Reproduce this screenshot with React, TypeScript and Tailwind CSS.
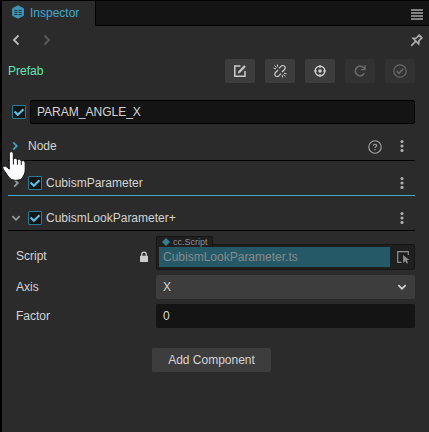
import React, { useState } from 'react';

const Chevron: React.FC<{ className?: string }> = ({ className = '' }) => (
  <svg viewBox="0 0 12 12" className={`w-3 h-3 shrink-0 ${className}`} fill="none" stroke="currentColor" strokeWidth="2">
    <path d="M3.5 1.5 8 6l-4.5 4.5" />
  </svg>
);

const SmallChevron: React.FC<{ className?: string }> = ({ className = '' }) => (
  <svg viewBox="0 0 10 10" className={`w-2.5 h-2.5 shrink-0 ${className}`} fill="none" stroke="currentColor" strokeWidth="1.8">
    <path d="M3.2 1.4 6.8 5 3.2 8.6" />
  </svg>
);

const InspectorIcon = () => (
  <svg viewBox="0 0 14 14" className="w-3.5 h-3.5 -translate-y-px">
    <path d="M7 .8 12.4 3.5v7L7 13.2 1.6 10.5v-7z" fill="#3f93b0" stroke="#3f93b0" strokeLinejoin="round" />
    <path d="M3.4 5.5h3M7.6 5.5h3M3.4 9.5h3M7.6 9.5h3" stroke="#20333b" />
    <path d="M3.4 7.5h3M7.6 7.5h3" stroke="#20333b" />
  </svg>
);

const PinIcon = () => (
  <svg viewBox="0 0 14 14" className="w-3.5 h-3.5" fill="none" stroke="#adadad" strokeWidth="1.7">
    <path d="M8.6 1.6 12.4 5.4M9.2 2.2 6.4 5 3.2 5.4 8.6 10.8l.4-3.2L11.8 4.8M5.6 8.4 1.2 12.8" />
  </svg>
);

const EditIcon = () => (
  <svg viewBox="0 0 14 14" className="w-3.5 h-3.5" fill="none" stroke="currentColor" strokeWidth="1.5">
    <path d="M7.5 2H1.8v10.2H12V7" />
    <path d="M6 8.2 12 2" strokeWidth="2.2" />
    <path d="m4.8 9.4.5-2.2 1.7 1.7z" fill="currentColor" stroke="none" />
  </svg>
);

const UnlinkIcon = () => (
  <svg viewBox="0 0 14 14" className="w-3.5 h-3.5" fill="none" stroke="currentColor" strokeWidth="1.2">
    <path d="M6 4.4 8.2 2.2a2.3 2.3 0 0 1 3.3 0 2.3 2.3 0 0 1 0 3.3L9 8M8 9.6l-2.2 2.2a2.3 2.3 0 0 1-3.3 0 2.3 2.3 0 0 1 0-3.3L5 6" />
    <path d="M.6 4.2l2.4.5M1.6 1.5l2 2M4.3.5l.5 2.4M13.4 9.8l-2.4-.5M12.4 12.5l-2-2M9.7 13.5l-.5-2.4" strokeWidth="1" />
  </svg>
);

const LocateIcon = () => (
  <svg viewBox="0 0 14 14" className="w-3.5 h-3.5" fill="none" stroke="currentColor" strokeWidth="1.5">
    <circle cx="7" cy="7" r="4.8" />
    <circle cx="7" cy="7" r="1.8" fill="currentColor" stroke="none" />
    <path d="M7 1v3M7 10v3M1 7h3M10 7h3" strokeWidth="1.2" />
  </svg>
);

const ResetIcon = () => (
  <svg viewBox="0 0 14 14" className="w-3.5 h-3.5" fill="none" stroke="currentColor" strokeWidth="1.7">
    <path d="M11.3 9.3A4.8 4.8 0 1 1 10.6 3.7L12 5.2" />
    <path d="M12 1.3v4.3H7.8" strokeWidth="1.4" />
  </svg>
);

const ApplyIcon = () => (
  <svg viewBox="0 0 14 14" className="w-3.5 h-3.5" fill="none" stroke="currentColor" strokeWidth="1.2">
    <circle cx="7" cy="7" r="6.2" />
    <path d="m3.8 7.2 2.3 2.2 4.2-4.6" strokeWidth="1.7" />
  </svg>
);

const DotsIcon = () => (
  <svg viewBox="0 0 4 12" className="w-1 h-3" fill="#acacac">
    <circle cx="2" cy="1.6" r="1.6" />
    <circle cx="2" cy="6" r="1.6" />
    <circle cx="2" cy="10.4" r="1.6" />
  </svg>
);

const HandCursor = () => (
  <svg viewBox="0 0 24 30" className="absolute left-0 top-[150px] w-6 h-[30px] z-10">
    <path
      d="M7.3 2.6Q7.3.6 9.3.6T11.3 2.6V8q.6-1 2.2-.7t1.8 1.6q.8-.9 2.2-.6t1.7 1.8q.8-.7 2.4-.3t1.6 2.2V19q0 2.4-1.1 4.6L20.8 26q-1.3 3.3-7.3 3.3-4.9 0-6.8-3.2L1.3 18.3Q.1 16.3 1.5 15.4q1.7-1 3.6.8l2.2 2z"
      fill="#fff"
      stroke="#151522"
      strokeWidth="1"
    />
    <path d="M11.4 8v5.5M15.4 9v4.7M19.3 10.2V14" stroke="#151522" strokeWidth="1" />
  </svg>
);

const Checkbox: React.FC<{ label: string }> = ({ label }) => {
  const [checked, setChecked] = useState(true);
  return (
    <button
      onClick={() => setChecked(!checked)}
      className="flex items-center justify-center w-3.5 h-3.5 shrink-0 rounded-[1px] border border-[#267e9b] bg-[#141414]"
      role="checkbox"
      aria-checked={checked}
      aria-label={label}
    >
      {checked && (
        <svg viewBox="0 0 12 12" className="w-3 h-3 shrink-0" fill="none" stroke="#5bc0e3" strokeWidth="2.1">
          <path d="M1.6 5.6 4.8 8.7 10.5 3.2" />
        </svg>
      )}
    </button>
  );
};

const actions = [
  { name: 'Edit', icon: <EditIcon />, disabled: false },
  { name: 'Unlink', icon: <UnlinkIcon />, disabled: false },
  { name: 'Locate', icon: <LocateIcon />, disabled: false },
  { name: 'Reset', icon: <ResetIcon />, disabled: true },
  { name: 'Apply', icon: <ApplyIcon />, disabled: true },
];

type SectionProps = {
  title: string;
  open?: boolean;
  active?: boolean;
  checkable?: boolean;
  help?: boolean;
  className: string;
};

const SectionHeader: React.FC<SectionProps> = ({ title, open, active, checkable, help, className }) => (
  <div className={`flex items-center ml-1.5 mr-3.5 border-b ${className}`}>
    <SmallChevron
      className={`${active ? 'ml-0.5 mr-2 text-[#3f9fc0]' : 'ml-[3px] mr-[7px] text-[#999999]'} ${open ? 'rotate-90' : ''}`}
    />
    <div className="flex items-center gap-1">
      {checkable && <Checkbox label={title} />}
      <span>{title}</span>
    </div>
    <div className="flex items-center ml-auto mr-[11px] gap-[18px]">
      {help && (
        <svg viewBox="0 0 14 14" className="w-3.5 h-3.5 mt-0.5" fill="none" stroke="#a6a6a6">
          <circle cx="7" cy="7" r="6.2" strokeWidth="1.1" />
          <path d="M5.4 5.8q0-1.5 1.6-1.5t1.6 1.3q0 .8-.8 1.2T7 8M7 9v1.2" strokeWidth="1.1" />
        </svg>
      )}
      <DotsIcon />
    </div>
  </div>
);

const App: React.FC = () => {
  const [name, setName] = useState('PARAM_ANGLE_X');
  const [factor, setFactor] = useState('0');

  return (
    <div className="relative w-[429px] h-[432px] overflow-hidden flex flex-col border-l-2 border-t border-black bg-[#2b2b2b] text-[#d4d4d4] text-xs leading-4 font-['Liberation_Sans',Arial,sans-serif]">
      {/* Tabs */}
      <div className="flex h-[25px] shrink-0">
        <div className="flex items-center w-[93px] pl-[9px] pb-px gap-[5px] text-[#3fa9d0]">
          <InspectorIcon />
          <span>Inspector</span>
        </div>
        <div className="flex flex-1 items-center justify-end border-l border-b border-black rounded-bl-[2px] bg-[#141414] pr-1.5">
          <svg viewBox="0 0 12 11" className="w-3 h-[11px] mt-0.5" stroke="#a6a6a6" strokeWidth="1.4">
            <path d="M0 1h12M0 4h12M0 7h12M0 10h12" />
          </svg>
        </div>
      </div>

      {/* History */}
      <div className="flex items-center h-7 shrink-0 pl-2 pr-[5px]">
        <Chevron className="rotate-180 text-[#b5b5b5]" />
        <Chevron className="ml-[19px] text-[#575757]" />
        <div className="ml-auto">
          <PinIcon />
        </div>
      </div>

      {/* Prefab toolbar */}
      <div className="flex items-center h-[35px] shrink-0 pl-1.5 pr-3.5 pb-0.5">
        <span className="text-[#63e6b0]">Prefab</span>
        <div className="flex ml-auto gap-2.5">
          {actions.map(action => (
            <button
              key={action.name}
              disabled={action.disabled}
              aria-label={action.name}
              className={`flex items-center justify-center w-[30px] h-6 rounded-[2px] ${
                action.disabled ? 'bg-[#323232] text-[#686868]' : 'bg-[#3d3d3d] text-[#cccccc]'
              }`}
            >
              {action.icon}
            </button>
          ))}
        </div>
      </div>

      {/* Node name */}
      <div className="flex items-center gap-1 mt-[11px] pl-2.5 pr-3.5 h-6 shrink-0">
        <Checkbox label="Active" />
        <input
          value={name}
          onChange={e => setName(e.target.value)}
          aria-label="Name"
          className="flex-1 min-w-0 h-6 px-1.5 rounded-[2px] border border-black bg-[#141414] outline-none"
        />
      </div>

      <SectionHeader title="Node" active help className="mt-[7px] h-[30px] border-black" />
      <SectionHeader title="CubismParameter" checkable className="mt-[10px] h-[25px] border-[#48a5c5]" />
      <SectionHeader title="CubismLookParameter+" open checkable className="mt-[10px] h-[25px] border-black" />

      {/* Properties */}
      <div className="flex flex-col gap-[5px] px-3.5 mt-[13px]">
        <div className="flex items-center h-[26px]">
          <div className="flex items-center justify-between w-[140px] pr-[7px] pb-0.5">
            <span>Script</span>
            <svg viewBox="0 0 10 12" className="w-2.5 h-3 mt-0.5">
              <rect x="1" y="4.8" width="8" height="6.2" rx=".6" fill="#cccccc" />
              <path d="M2.8 5V3.3a2.2 2.2 0 0 1 4.4 0V5" fill="none" stroke="#cccccc" strokeWidth="1.3" />
            </svg>
          </div>
          <div className="relative flex flex-1 items-center h-[26px] pl-0.5 rounded-[2px] border border-[#161616] bg-[#1f1f1f]">
            {/* Asset type tag */}
            <div className="absolute -left-px -top-[9px] flex items-center w-[57px] h-[11px] pl-[5px] gap-[3px] overflow-hidden rounded-t-[2px] border border-b-0 border-[#161616] bg-[#1f1f1f] text-[9px] leading-[10px] text-[#8f8f8f]">
              <svg viewBox="0 0 8 8" className="w-2 h-2 shrink-0 -mt-px" fill="#3b7d94">
                <path d="m4 0 4 4-4 4-4-4z" />
              </svg>
              <span className="whitespace-nowrap">cc.Script</span>
            </div>
            <div className="relative w-[231px] h-5 pl-1 leading-5 bg-[#265968] text-[#848989]">CubismLookParameter.ts</div>
            <svg viewBox="0 0 13 13" className="w-[13px] h-[13px] ml-[7px]">
              <path d="M4.5 11.3H.7V.7h10.6V4" fill="none" stroke="#8f8f8f" strokeWidth="1.2" />
              <path d="m6 4 6.3 5-2.5.3 1.3 2.6-1.5.7-1.3-2.5L6.2 12z" fill="#8f8f8f" />
            </svg>
          </div>
        </div>

        <div className="flex items-center h-6">
          <span className="w-[140px]">Axis</span>
          <button className="flex flex-1 items-center justify-between h-6 px-2 pl-[7px] rounded-[2px] bg-[#3d3d3d]">
            <span>X</span>
            <SmallChevron className="rotate-90 text-[#d4d4d4]" />
          </button>
        </div>

        <div className="flex items-center h-6">
          <span className="w-[140px]">Factor</span>
          <input
            value={factor}
            onChange={e => setFactor(e.target.value)}
            aria-label="Factor"
            className="flex-1 min-w-0 h-6 px-[7px] rounded-[2px] bg-[#141414] outline-none"
          />
        </div>
      </div>

      <button className="w-[119px] h-6 mt-5 ml-[150px] shrink-0 rounded-[2px] bg-[#3d3d3d]">Add Component</button>

      <HandCursor />
    </div>
  );
};

export default App;
